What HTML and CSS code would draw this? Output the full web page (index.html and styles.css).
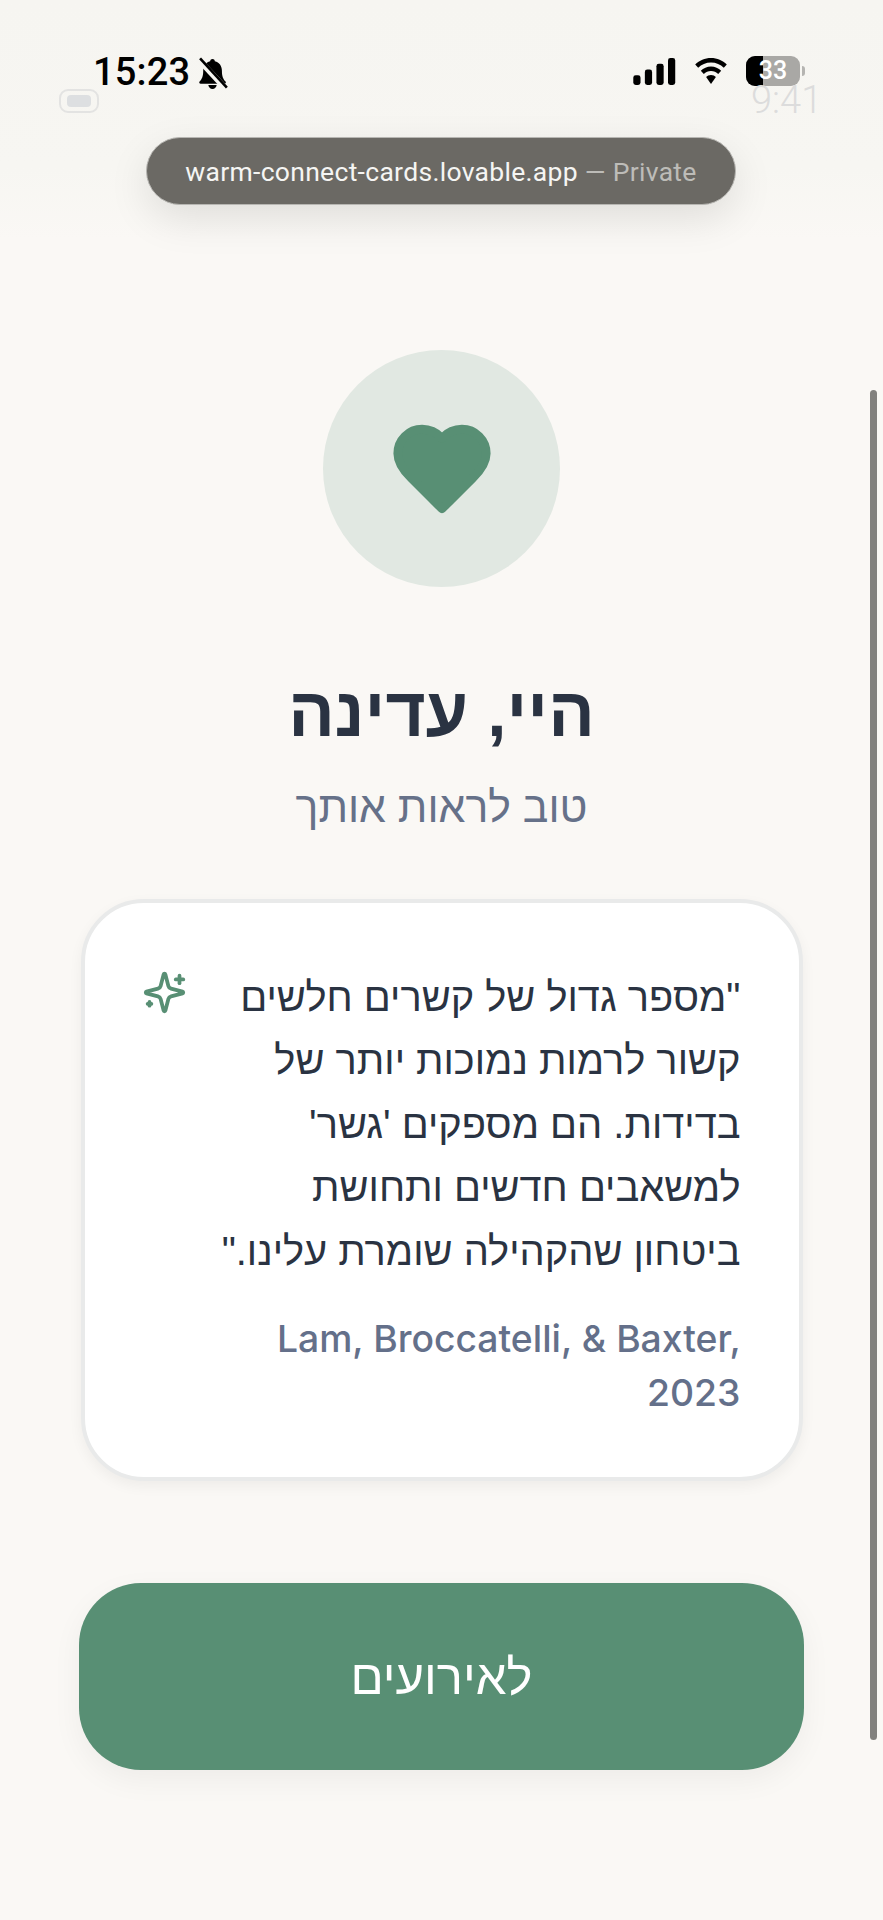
FILE: index.html
```html
<!DOCTYPE html>
<html lang="he" dir="rtl">
<head>
<meta charset="utf-8">
<title>warm-connect-cards</title>
<link rel="stylesheet" href="styles.css">
</head>
<body>
<div class="screen">
  <div class="overlay-top" dir="ltr">
    <div class="status-time">
      <span class="time">15:23</span>
      <svg class="bell" viewBox="0 0 24 26" aria-hidden="true">
        <path d="M12 1.500c1 0 1.700.7 1.800 1.700 3.400.8 5.400 3.600 5.400 7.300 0 4.300 1 6.500 2.800 8.300.5.600.2 1.700-.9 1.700H3c-1.100 0-1.400-1.100-.9-1.700C3.900 17 4.900 14.800 4.900 10.500c0-3.700 2-6.500 5.300-7.300.1-1 .8-1.700 1.800-1.700Z"/>
        <path d="M8.800 21.500h6.400c-.2 1.800-1.500 3-3.200 3s-3-1.200-3.200-3Z"/>
        <path class="bell-gap" d="M1 1.500 22 24"/>
        <path class="bell-slash" d="M2.500 1 23 23.500"/>
      </svg>
    </div>
    <div class="status-right">
      <svg class="signal" viewBox="0 0 44 28" aria-hidden="true">
        <rect x="0" y="18" width="7.500" height="10" rx="2.500"/>
        <rect x="12" y="12" width="7.500" height="16" rx="2.500"/>
        <rect x="24" y="6" width="7.500" height="22" rx="2.500"/>
        <rect x="36" y="0" width="7.500" height="28" rx="2.500"/>
      </svg>
      <svg class="wifi" viewBox="0 0 36 28" aria-hidden="true">
        <path d="M18 5.500c5 0 9.500 2 12.800 5.200l3-3.200C29.700 3.400 24.200 1 18 1S6.300 3.400 2.200 7.500l3 3.200C8.500 7.500 13 5.500 18 5.500Z"/>
        <path d="M18 14c2.800 0 5.300 1.100 7.200 2.900l3-3.100C25.500 11.100 22 9.500 18 9.500s-7.500 1.600-10.200 4.300l3 3.100C12.700 15.100 15.200 14 18 14Z"/>
        <path d="M18 18c-2 0-3.700.8-4.900 2L18 27l4.900-7c-1.200-1.200-2.900-2-4.900-2Z"/>
      </svg>
      <div class="battery">
        <span class="battery-fill"></span>
        <span class="battery-num">33</span>
      </div>
      <span class="battery-tip"></span>
    </div>
    <span class="ghost-pill"><span class="ghost-pill-dot"></span></span>
    <span class="ghost-time">9:41</span>
    <div class="url-pill">warm-connect-cards.lovable.app <span class="url-private">— Private</span></div>
  </div>

  <main class="content">
    <div class="avatar">
      <svg class="heart" viewBox="0 0 24 24" aria-hidden="true">
        <path d="M19 14c1.490-1.460 3-3.210 3-5.500A5.500 5.500 0 0 0 16.500 3c-1.760 0-3 .5-4.500 2-1.500-1.500-2.740-2-4.500-2A5.500 5.500 0 0 0 2 8.500c0 2.300 1.500 4.050 3 5.500l7 7Z"/>
      </svg>
    </div>
    <h1 class="title">היי, עדינה</h1>
    <p class="subtitle">טוב לראות אותך</p>

    <section class="card">
      <div class="card-text">
        <p class="quote">"מספר גדול של קשרים חלשים קשור לרמות נמוכות יותר של בדידות. הם מספקים 'גשר' למשאבים חדשים ותחושת ביטחון שהקהילה שומרת עלינו."</p>
        <p class="cite">Lam, Broccatelli, &amp; Baxter, 2023</p>
      </div>
      <svg class="sparkles" viewBox="0 0 24 24" aria-hidden="true">
        <path d="M9.937 15.500A2 2 0 0 0 8.500 14.063l-6.135-1.582a.5.5 0 0 1 0-.962L8.500 9.936A2 2 0 0 0 9.937 8.500l1.582-6.135a.5.5 0 0 1 .963 0L14.063 8.500A2 2 0 0 0 15.500 9.937l6.135 1.581a.5.5 0 0 1 0 .964L15.500 14.063a2 2 0 0 0-1.437 1.437l-1.582 6.135a.5.5 0 0 1-.963 0z"/>
        <path d="M20 3v4"/><path d="M22 5h-4"/><path d="M4 17v2"/><path d="M5 18H3"/>
      </svg>
    </section>

    <button class="cta" type="button">לאירועים</button>
  </main>

  <div class="scrollbar"></div>
</div>
</body>
</html>
```
FILE: styles.css
```css
* { box-sizing: border-box; }
html, body { margin: 0; padding: 0; }
body {
  background: #faf8f5;
  font-family: Inter, "Liberation Sans", sans-serif;
  color: #2a3342;
}
.screen {
  position: relative;
  width: 883px;
  height: 1920px;
  overflow: hidden;
  background: #faf8f5;
}
.overlay-top {
  position: absolute;
  top: 0;
  left: 0;
  width: 883px;
  height: 240px;
  background: linear-gradient(#f6f5f1, #f7f6f2 70%, #faf8f5);
}
.status-time {
  position: absolute;
  left: 93px;
  top: 49px;
  display: flex;
  align-items: center;
  gap: 6px;
  color: #000;
}
.time {
  font-family: Roboto, Inter, sans-serif;
  font-size: 38px;
  font-weight: 500;
  line-height: 46px;
  letter-spacing: 0.2px;
}
.bell { width: 33px; height: 34px; margin-top: 3px; }
.bell path { fill: #000; }
.bell .bell-gap { fill: none; stroke: #f6f5f1; stroke-width: 4.500; }
.bell .bell-slash { fill: none; stroke: #000; stroke-width: 2; }
.status-right {
  position: absolute;
  left: 633px;
  top: 56px;
  display: flex;
  align-items: center;
}
.signal { width: 43px; height: 27px; fill: #000; }
.wifi { width: 36px; height: 28px; fill: #000; margin-left: 17px; margin-right: 17px; }
.battery {
  position: relative;
  width: 54px;
  height: 30px;
  border-radius: 9px;
  background: #a9a8a5;
  overflow: hidden;
}
.battery-fill {
  position: absolute;
  left: 0;
  top: 0;
  bottom: 0;
  width: 17px;
  background: #000;
}
.battery-num {
  position: absolute;
  inset: 0;
  text-align: center;
  font-family: Roboto, Inter, sans-serif;
  font-size: 25px;
  font-weight: 500;
  line-height: 30px;
  color: #fff;
}
.battery-tip {
  width: 3px;
  height: 10px;
  margin-left: 2px;
  border-radius: 0 3px 3px 0;
  background: #b5b4b1;
}
.ghost-pill {
  position: absolute;
  left: 59px;
  top: 89px;
  width: 40px;
  height: 24px;
  display: flex;
  align-items: center;
  justify-content: center;
  border: 2px solid #e3e3e2;
  border-radius: 9px;
}
.ghost-pill-dot {
  width: 24px;
  height: 12px;
  border-radius: 4px;
  background: #dddfe1;
}
.ghost-time {
  position: absolute;
  left: 751px;
  top: 86px;
  font-family: Roboto, Inter, sans-serif;
  font-size: 38px;
  font-weight: 300;
  line-height: 28px;
  color: #dcdcdc;
}
.url-pill {
  position: absolute;
  left: 146px;
  top: 137px;
  width: 590px;
  height: 68px;
  display: flex;
  align-items: center;
  justify-content: center;
  border: 1px solid #b7b6b2;
  border-radius: 34px;
  background: #6b6964;
  box-shadow: 0 14px 40px rgba(0, 0, 0, 0.10);
  font-family: Roboto, Inter, sans-serif;
  font-size: 26.500px;
  letter-spacing: 0.300px;
  white-space: pre;
  color: #f5f5f3;
}
.url-private { color: #bdbcb8; }

.content {
  display: flex;
  flex-direction: column;
  align-items: center;
  padding-top: 350px;
}
.avatar {
  width: 237px;
  height: 237px;
  display: flex;
  align-items: center;
  justify-content: center;
  border-radius: 50%;
  background: #e1e8e2;
}
.heart {
  width: 106px;
  height: 106px;
  fill: #588f74;
  stroke: #588f74;
  stroke-width: 2;
  stroke-linecap: round;
  stroke-linejoin: round;
}
.title {
  margin: 85px 0 0;
  font-family: "Liberation Sans", sans-serif;
  font-size: 69px;
  font-weight: 700;
  line-height: 81px;
  color: #2a3342;
}
.subtitle {
  margin: 24px 0 0;
  font-family: "Liberation Sans", sans-serif;
  font-size: 42.800px;
  font-weight: 400;
  line-height: 61px;
  color: #667189;
}
.card {
  display: flex;
  gap: 24px;
  width: 722px;
  margin-top: 61px;
  padding: 63px 58px 57px 57px;
  border: 4px solid #e9eaea;
  border-radius: 63px;
  background: #fff;
  box-shadow: 0 5px 14px rgba(0, 0, 0, 0.05);
}
.card-text { flex: 1; min-width: 0; }
.quote {
  margin: 0;
  font-family: "Liberation Sans", sans-serif;
  font-size: 39.800px;
  line-height: 63.400px;
  color: #2a3342;
}
.cite {
  margin: 29px 0 0;
  font-size: 37.300px;
  font-weight: 500;
  line-height: 54px;
  color: #64708a;
}
.sparkles {
  flex: none;
  width: 45px;
  height: 45px;
  margin-top: 4px;
  fill: none;
  stroke: #588f74;
  stroke-width: 2;
  stroke-linecap: round;
  stroke-linejoin: round;
}
.cta {
  width: 725px;
  height: 187px;
  margin-top: 102px;
  border: 0;
  border-radius: 62px;
  background: #588f74;
  box-shadow: 0 10px 30px rgba(0, 0, 0, 0.05);
  font-family: "Liberation Sans", sans-serif;
  font-size: 49px;
  color: #fff;
}
.scrollbar {
  position: absolute;
  left: 870px;
  top: 390px;
  width: 7px;
  height: 1350px;
  border-radius: 4px;
  background: #82817e;
}
```
